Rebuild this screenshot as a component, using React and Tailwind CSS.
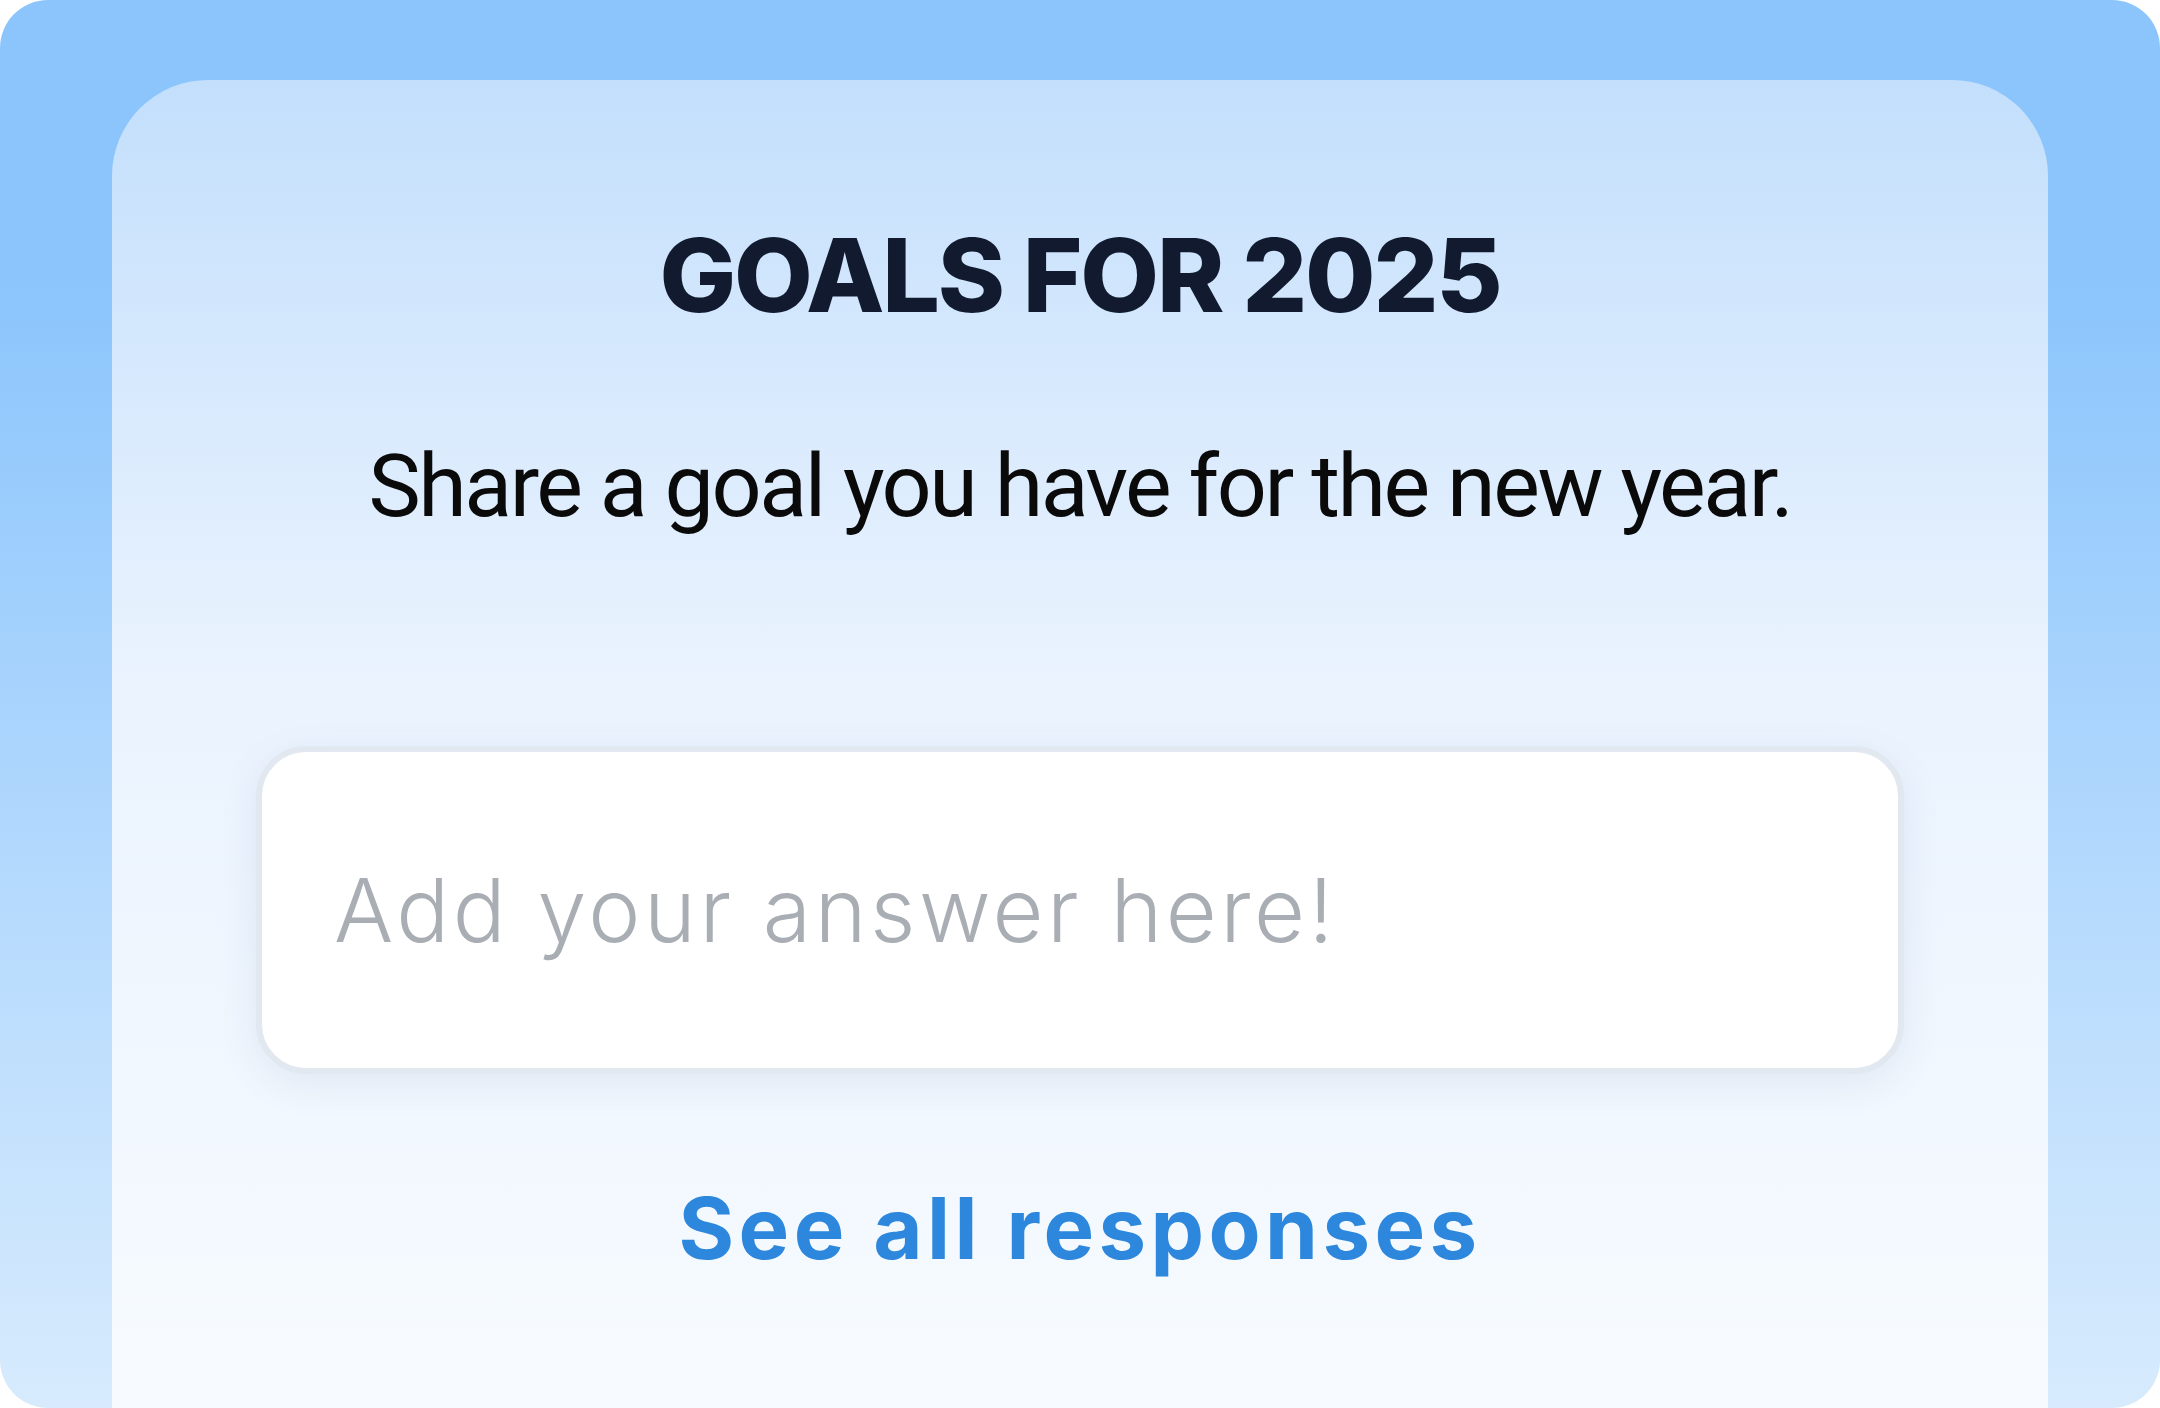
export default function App() {
  return (
    <div className="w-[2160px] h-[1408px] bg-white">
      <div className="h-full rounded-[48px] bg-linear-to-b from-[#8bc5fc] from-20% to-[#d7ebfd] pt-[80px] px-[112px] overflow-hidden">
        <div className="h-full rounded-t-[96px] bg-linear-to-b from-[#c3dffc] via-[#eaf3fe] via-45% to-[#f7fbff] flex flex-col items-center pt-[144px]">
          <h1 className="font-['Inter',sans-serif] font-extrabold text-[102px] leading-none text-[#111a2e] tracking-[-0.022em] whitespace-nowrap">
            GOALS FOR 2025
          </h1>
          <p className="mt-[116px] font-['Roboto',sans-serif] text-[88px] leading-none text-[#0a0a0a] tracking-[-0.028em] whitespace-nowrap">
            Share a goal you have for the new year.
          </p>
          <div className="mt-[216px] w-[1648px] h-[328px] rounded-[50px] border-[6px] border-[#e2e8f0] bg-white shadow-[0_10px_40px_rgba(20,50,110,0.08)] flex items-center pl-[72px]">
            <input
              type="text"
              placeholder="Add your answer here!"
              className="w-full bg-transparent outline-none font-['Inter',sans-serif] font-light text-[88px] leading-none tracking-[0.04em] text-[#333] placeholder:text-[#a9adb4]"
            />
          </div>
          <div className="mt-[112px] font-['Inter',sans-serif] font-bold text-[85px] leading-none text-[#2d88dd] tracking-[0.052em] whitespace-nowrap">
            See all responses
          </div>
        </div>
      </div>
    </div>
  );
}
